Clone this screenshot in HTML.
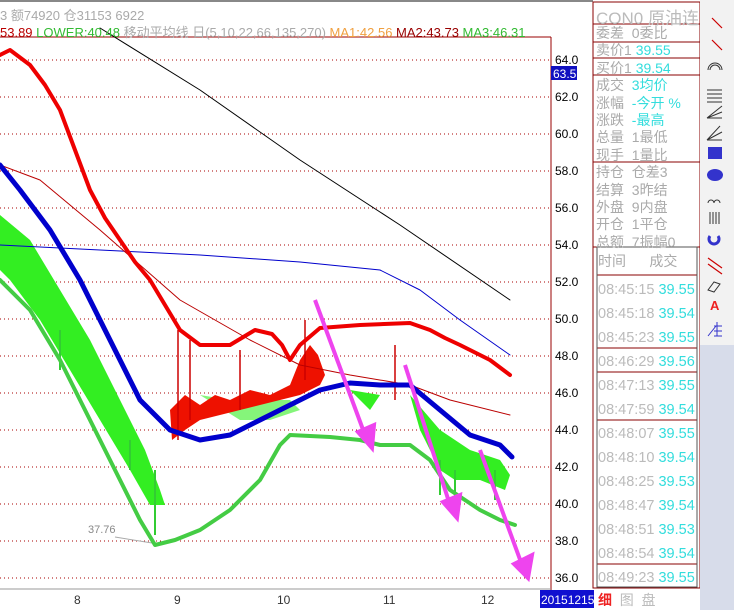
<!DOCTYPE html>
<html><head><meta charset="utf-8"><style>
body{margin:0;width:734px;height:610px;overflow:hidden;background:#fff;font-family:"Liberation Sans","Noto Sans CJK SC",sans-serif;position:relative}
.t{position:absolute;white-space:nowrap}
</style></head><body>
<svg width="734" height="610" style="position:absolute;left:0;top:0" font-family="Liberation Sans, Noto Sans CJK SC, sans-serif">
<line x1="0" y1="1" x2="593" y2="1" stroke="#888" stroke-width="2"/>
<line x1="0" y1="37" x2="551" y2="37" stroke="#900" stroke-width="1"/>
<g stroke="#a00" stroke-dasharray="1,3" stroke-width="1">
<line x1="0" y1="60" x2="551" y2="60"/><line x1="0" y1="97" x2="551" y2="97"/><line x1="0" y1="134" x2="551" y2="134"/><line x1="0" y1="171" x2="551" y2="171"/><line x1="0" y1="208" x2="551" y2="208"/><line x1="0" y1="245" x2="551" y2="245"/><line x1="0" y1="282" x2="551" y2="282"/><line x1="0" y1="319" x2="551" y2="319"/><line x1="0" y1="356" x2="551" y2="356"/><line x1="0" y1="393" x2="551" y2="393"/><line x1="0" y1="430" x2="551" y2="430"/><line x1="0" y1="467" x2="551" y2="467"/><line x1="0" y1="504" x2="551" y2="504"/><line x1="0" y1="541" x2="551" y2="541"/><line x1="0" y1="578" x2="551" y2="578"/>
</g>
<line x1="551" y1="37" x2="551" y2="590" stroke="#900"/>
<line x1="0" y1="589" x2="551" y2="589" stroke="#999"/>
<g font-size="12" fill="#000">
<text x="555" y="64">64.0</text><text x="555" y="101">62.0</text><text x="555" y="138">60.0</text><text x="555" y="175">58.0</text><text x="555" y="212">56.0</text><text x="555" y="249">54.0</text><text x="555" y="286">52.0</text><text x="555" y="323">50.0</text><text x="555" y="360">48.0</text><text x="555" y="397">46.0</text><text x="555" y="434">44.0</text><text x="555" y="471">42.0</text><text x="555" y="508">40.0</text><text x="555" y="545">38.0</text><text x="555" y="582">36.0</text>
</g>
<rect x="551" y="66" width="26" height="14" fill="#1010c0"/><text x="553" y="78" font-size="12" fill="#fff">63.5</text>
<g font-size="12" fill="#333"><text x="74" y="604">8</text><text x="174" y="604">9</text><text x="277" y="604">10</text><text x="383" y="604">11</text><text x="481" y="604">12</text></g>
<text x="88" y="533" font-size="11" fill="#888">37.76</text>
<polyline points="115,537 152,543" stroke="#aaa" fill="none"/>
<path d="M0,215 L30,240 L60,290 L90,340 L120,400 L145,450 L160,490 L165,505 L150,505 L130,470 L100,420 L70,370 L40,320 L10,280 L0,270Z" fill="#33ee22"/>
<path d="M200,395 L230,400 L260,400 L290,400 L300,410 L270,420 L240,420 Z" fill="#33ee22" opacity=".6"/>
<path d="M410,395 L440,430 L470,450 L500,460 L510,475 L505,490 L480,480 L455,480 L440,470 L420,430Z" fill="#33ee22"/>
<path d="M350,390 L380,395 L370,410 Z" fill="#33ee22"/>
<g stroke="#3c3" stroke-width="2"><line x1="155" y1="470" x2="155" y2="535"/><line x1="130" y1="440" x2="130" y2="470"/><line x1="60" y1="330" x2="60" y2="370"/><line x1="440" y1="460" x2="440" y2="495"/><line x1="455" y1="470" x2="455" y2="510"/><line x1="495" y1="470" x2="495" y2="500"/></g>
<path d="M170,410 L185,395 L200,405 L215,395 L230,400 L250,390 L270,395 L290,385 L300,360 L310,345 L318,355 L325,375 L320,385 L300,395 L280,400 L260,405 L240,410 L220,415 L200,420 L185,430 L172,440Z" fill="#e10"/>
<g stroke="#c00" stroke-width="1.5"><line x1="178" y1="330" x2="178" y2="440"/><line x1="190" y1="340" x2="190" y2="420"/><line x1="240" y1="350" x2="240" y2="410"/><line x1="305" y1="320" x2="305" y2="380"/><line x1="395" y1="345" x2="395" y2="400"/></g>
<g fill="none" stroke-linejoin="round" stroke-linecap="round">
<polyline points="100,28 200,90 300,160 400,225 510,300" stroke="#000"/>
<polyline points="0,245 100,250 200,255 300,262 380,270 420,290 460,320 510,355" stroke="#00c"/>
<polyline points="0,165 40,180 100,230 180,300 250,340 300,365 350,375 410,385 450,400 510,415" stroke="#b00"/>
<polyline points="0,55 10,50 30,65 45,85 60,110 75,150 90,190 105,218 120,240 135,262 150,280 165,305 180,330 200,345 230,345 255,330 272,334 282,345 290,360 300,345 320,328 360,325 410,323 430,330 445,338 460,345 490,360 510,375" stroke="#e00" stroke-width="4"/>
<polyline points="0,280 30,310 60,360 90,420 120,480 140,520 155,545 175,540 200,530 230,510 260,480 280,445 290,435 330,437 360,440 380,445 410,445 430,460 450,490 480,510 500,520 515,525" stroke="#4c4" stroke-width="4"/>
<polyline points="0,165 20,190 50,230 80,280 110,340 140,400 170,430 200,440 230,435 260,420 290,405 320,390 350,383 380,385 410,385 440,410 470,435 500,445 512,457" stroke="#00c" stroke-width="5"/>
</g>
<g stroke="#e4e" stroke-width="4" fill="#e4e">
<line x1="315" y1="300" x2="365" y2="435"/><path d="M358,432 L372,448 L374,425Z"/>
<line x1="405" y1="365" x2="450" y2="505"/><path d="M443,502 L457,518 L460,495Z"/>
<line x1="480" y1="450" x2="522" y2="565"/><path d="M514,564 L528,578 L532,555Z"/>
</g>
<rect x="593" y="2" width="107" height="586" fill="#fff" stroke="#800"/>
<rect x="540" y="590" width="54" height="18" fill="#1010d0"/><text x="541" y="604" font-size="12" fill="#fff">20151215</text>
<g stroke="#800"><line x1="593" y1="24" x2="700" y2="24"/><line x1="593" y1="42" x2="700" y2="42"/><line x1="593" y1="58" x2="700" y2="58"/><line x1="593" y1="75" x2="700" y2="75"/><line x1="593" y1="162" x2="700" y2="162"/><line x1="593" y1="247" x2="700" y2="247"/><line x1="597" y1="275" x2="697" y2="275"/><line x1="597" y1="348" x2="697" y2="348"/><line x1="597" y1="372" x2="697" y2="372"/><line x1="597" y1="420" x2="697" y2="420"/><line x1="597" y1="564" x2="697" y2="564"/></g>
<rect x="597" y="247" width="100" height="340" fill="none" stroke="#555"/>
<rect x="700" y="0" width="34" height="610" fill="#d7dcea"/><rect x="700" y="0" width="34" height="345" fill="#f2f2f2"/>
<g stroke="#c00" stroke-width="1.2"><line x1="712" y1="18" x2="722" y2="28"/><line x1="712" y1="40" x2="722" y2="50"/><line x1="708" y1="258" x2="722" y2="268"/><line x1="708" y1="264" x2="722" y2="274"/></g>
<rect x="708" y="147" width="14" height="12" fill="#33c"/><ellipse cx="715" cy="175" rx="8" ry="6" fill="#33c"/>
<g stroke="#333" fill="none"><path d="M708,70 a7,7 0 0 1 14,0 M710,70 a5,5 0 0 1 10,0"/><path d="M707,90 h15 M707,94 h15 M707,98 h15 M707,102 h15"/><path d="M707,118 L722,106 M707,118 L722,112 M707,118 L722,118"/><path d="M707,140 L720,126 M707,140 L722,132 M707,140 L722,140"/><path d="M708,203 a3,3 0 0 1 6,0 a3,3 0 0 1 6,0"/><path d="M710,212 v12 M713,212 v12 M716,212 v12 M719,212 v12"/><path d="M708,290 l6,-8 l6,2 l-6,8z"/></g>
<text x="710" y="310" font-size="13" font-weight="bold" fill="#e22">A</text>
<path d="M708,336 L716,326 M717,322 v14 M714,326 h8 M714,331 h8 M714,336 h8" stroke="#33c" fill="none"/>
<path d="M710,236 a5,5 0 1 0 8,0" stroke="#33c" stroke-width="3" fill="none"/>
</svg>
<div class="t" style="left:0;top:5px;font-size:13px;color:#aaa">3 额74920 仓31153 6922</div>
<div class="t" style="left:0;top:22px;font-size:13px;color:#aaa"><span style="color:#b00">53.89</span> <span style="color:#3b3">LOWER:40.48</span> 移动平均线 日(5,10,22,66,135,270) <span style="color:#f0a040">MA1:42.56</span> <span style="color:#900">MA2:43.73</span> <span style="color:#3b3">MA3:46.31</span></div>
<div class="t" style="left:596px;top:4px;font-size:17px;color:#bbb;width:103px;overflow:hidden">CON0 原油连</div>
<div style="position:absolute;left:596px;top:25px;font-size:14px;line-height:17.4px;color:#aaa;white-space:nowrap;width:103px;overflow:hidden">
委差 &nbsp;0委比<br>卖价1 <span style="color:#3dd">39.55</span><br>买价1 <span style="color:#3dd">39.54</span><br>成交 &nbsp;<span style="color:#3dd">3均价</span><br>涨幅 &nbsp;<span style="color:#3dd">-今开 %</span><br>涨跌 &nbsp;<span style="color:#3dd">-最高</span><br>总量 &nbsp;1最低<br>现手 &nbsp;1量比<br>持仓 &nbsp;仓差3<br>结算 &nbsp;3昨结<br>外盘 &nbsp;9内盘<br>开仓 &nbsp;1平仓<br>总额 &nbsp;7振幅0</div>
<div class="t" style="left:598px;top:251px;font-size:14px;color:#aaa">时间 &nbsp;&nbsp;&nbsp;&nbsp;&nbsp;成交</div>
<div style="position:absolute;left:598px;top:278px;font-size:14.5px;line-height:24px;color:#bbb;white-space:nowrap">
08:45:15 <span style="color:#3dd">39.55</span><br>08:45:18 <span style="color:#3dd">39.54</span><br>08:45:23 <span style="color:#3dd">39.55</span><br>08:46:29 <span style="color:#3dd">39.56</span><br>08:47:13 <span style="color:#3dd">39.55</span><br>08:47:59 <span style="color:#3dd">39.54</span><br>08:48:07 <span style="color:#3dd">39.55</span><br>08:48:10 <span style="color:#3dd">39.54</span><br>08:48:25 <span style="color:#3dd">39.53</span><br>08:48:47 <span style="color:#3dd">39.54</span><br>08:48:51 <span style="color:#3dd">39.53</span><br>08:48:54 <span style="color:#3dd">39.54</span><br>08:49:23 <span style="color:#3dd">39.55</span></div>
<div class="t" style="left:598px;top:590px;font-size:14px;color:#bbb"><span style="color:#e22;font-weight:bold">细</span>&nbsp;&nbsp;图&nbsp;&nbsp;盘</div>
</body></html>
